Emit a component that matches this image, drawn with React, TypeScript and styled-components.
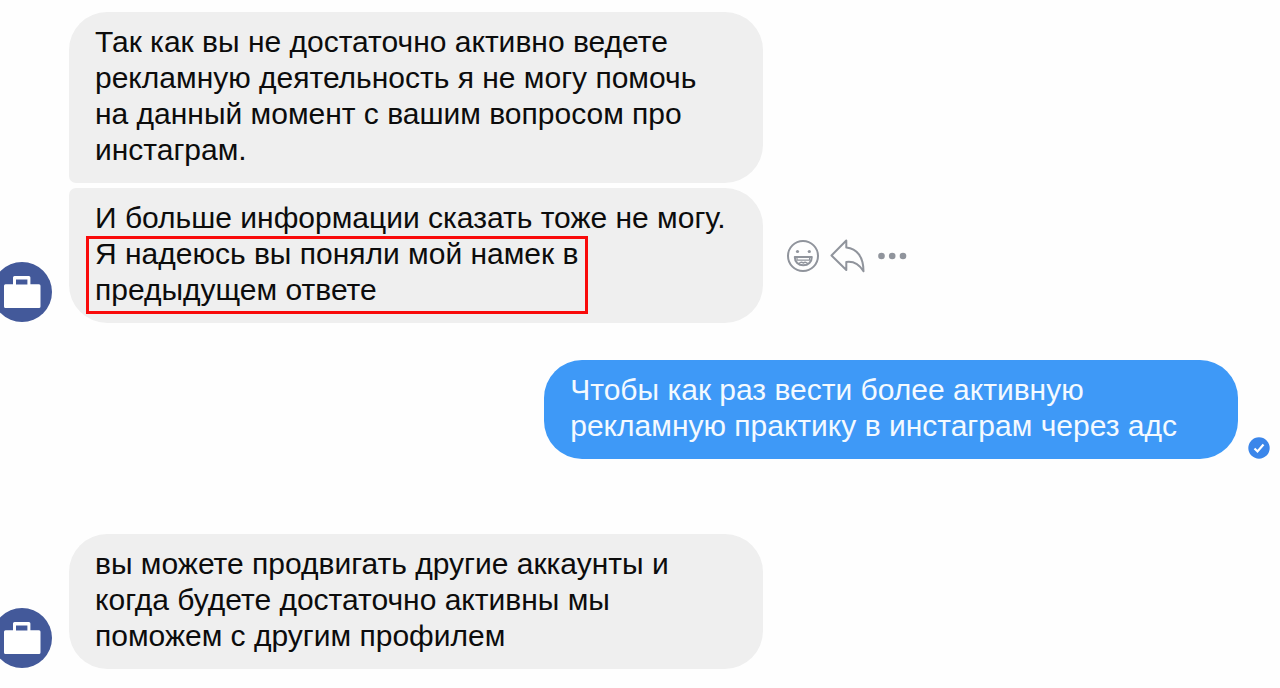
import React from "react";
import styled, { createGlobalStyle } from "styled-components";

const GlobalStyle = createGlobalStyle`
  * { box-sizing: border-box; }
  body {
    margin: 0;
    background: #fefefe;
    font-family: "Liberation Sans", "Helvetica Neue", Arial, sans-serif;
  }
`;

const Thread = styled.main`
  display: flex;
  flex-direction: column;
  padding: 12px 0 19px;
  overflow-x: hidden;
`;

const Row = styled.div<{ $own?: boolean; $gap?: number }>`
  display: flex;
  align-items: flex-end;
  justify-content: ${(p) => (p.$own ? "flex-end" : "flex-start")};
  margin-top: ${(p) => p.$gap ?? 0}px;
`;

const AvatarSlot = styled.div`
  flex: none;
  display: flex;
  width: 69px;
`;

const Avatar = styled.svg`
  display: block;
  width: 60px;
  height: 60px;
  margin: 0 0 1px -8px;
`;

const Bubble = styled.p<{ $own?: boolean; $corners?: string }>`
  flex: none;
  width: 54.2%;
  margin: 0;
  padding: 12px 16px 15px 26px;
  border-radius: ${(p) => p.$corners ?? "38px"};
  background: ${(p) => (p.$own ? "#3e99f7" : "#efefef")};
  color: ${(p) => (p.$own ? "#f4faff" : "#0c0c0c")};
  font-size: 30px;
  line-height: 36px;
`;

const Highlight = styled.mark`
  position: relative;
  display: inline-block;
  background: none;
  color: inherit;

  &::after {
    content: "";
    position: absolute;
    inset: 0 -10px -6px -9px;
    border: 3px solid #f90a0a;
    pointer-events: none;
  }
`;

const Actions = styled.div`
  display: flex;
  align-self: center;
  align-items: center;
  gap: 9px;
  margin-left: 23px;
`;

const ActionButton = styled.button`
  display: flex;
  padding: 0;
  border: 0;
  background: none;
  color: #90949c;
  cursor: pointer;

  svg { display: block; }
`;

const Status = styled.svg`
  flex: none;
  display: block;
  width: 22px;
  height: 22px;
  margin: 0 10px;
`;

const BusinessAvatar = () => (
  <AvatarSlot>
    <Avatar viewBox="0 0 60 60" role="img" aria-label="Менеджер">
      <circle cx="30" cy="30" r="30" fill="#43599a" />
      <path
        d="M13.500 22.300h7.500v-6.800a1.500 1.500 0 0 1 1.500-1.500h14.400a1.500 1.500 0 0 1 1.500 1.500v6.800H47a1.500 1.500 0 0 1 1.500 1.500v20.700a1.500 1.500 0 0 1-1.500 1.500H13.500a1.500 1.500 0 0 1-1.500-1.500V23.800a1.500 1.500 0 0 1 1.500-1.500zM24 17.600v4.900h11.400v-4.900z"
        fill="#fff"
        fillRule="evenodd"
      />
    </Avatar>
  </AvatarSlot>
);

export default function App() {
  return (
    <>
      <GlobalStyle />
      <Thread>
        <Row>
          <AvatarSlot />
          <Bubble $corners="38px 38px 38px 7px">
            Так как вы не достаточно активно ведете
            <br />
            рекламную деятельность я не могу помочь
            <br />
            на данный момент с вашим вопросом про
            <br />
            инстаграм.
          </Bubble>
        </Row>

        <Row $gap={5}>
          <BusinessAvatar />
          <Bubble $corners="7px 38px 38px 38px">
            И больше информации сказать тоже не могу.
            <br />
            <Highlight>
              Я надеюсь вы поняли мой намек в
              <br />
              предыдущем ответе
            </Highlight>
          </Bubble>
          <Actions>
            <ActionButton type="button" aria-label="Реакция">
              <svg width="34" height="34" viewBox="0 0 34 34" fill="none" stroke="currentColor" strokeWidth="2">
                <circle cx="17" cy="17" r="15" />
                <circle cx="11.500" cy="12.500" r="1.600" fill="currentColor" stroke="none" />
                <circle cx="23.300" cy="12.500" r="1.600" fill="currentColor" stroke="none" />
                <path d="M8.800 18h17c0 5-3.500 8.300-8.500 8.300s-8.500-3.300-8.500-8.300z" strokeLinejoin="round" />
                <path d="M11 18.500v2.700h12.600v-2.700" strokeWidth="1.200" />
                <path d="M12.700 25.300c1-2.200 3-2.500 4.600-1.300c1.600-1.200 3.600-.9 4.600 1.300" strokeWidth="1.500" />
              </svg>
            </ActionButton>
            <ActionButton type="button" aria-label="Ответить">
              <svg width="36" height="34" viewBox="0 0 36 34" fill="none" stroke="currentColor" strokeWidth="2" strokeLinejoin="round">
                <path d="M17.300 1.500L2.500 16.500L17.300 31V23C24.500 22 30 25 34.500 32.300C34.500 18 28 9.500 17.300 8.500z" />
              </svg>
            </ActionButton>
            <ActionButton type="button" aria-label="Ещё">
              <svg width="36" height="34" viewBox="0 0 36 34" fill="currentColor">
                <circle cx="7.500" cy="17" r="3.300" />
                <circle cx="18.200" cy="17" r="3.300" />
                <circle cx="29" cy="17" r="3.300" />
              </svg>
            </ActionButton>
          </Actions>
        </Row>

        <Row $own $gap={37}>
          <Bubble $own>
            Чтобы как раз вести более активную
            <br />
            рекламную практику в инстаграм через адс
          </Bubble>
          <Status viewBox="0 0 22 22" role="img" aria-label="Доставлено">
            <circle cx="11" cy="11" r="10.700" fill="#3b86ea" />
            <path d="M6.500 11.500l3 3l6-7" fill="none" stroke="#fff" strokeWidth="2.200" />
          </Status>
        </Row>

        <Row $gap={75}>
          <BusinessAvatar />
          <Bubble>
            вы можете продвигать другие аккаунты и
            <br />
            когда будете достаточно активны мы
            <br />
            поможем с другим профилем
          </Bubble>
        </Row>
      </Thread>
    </>
  );
}
